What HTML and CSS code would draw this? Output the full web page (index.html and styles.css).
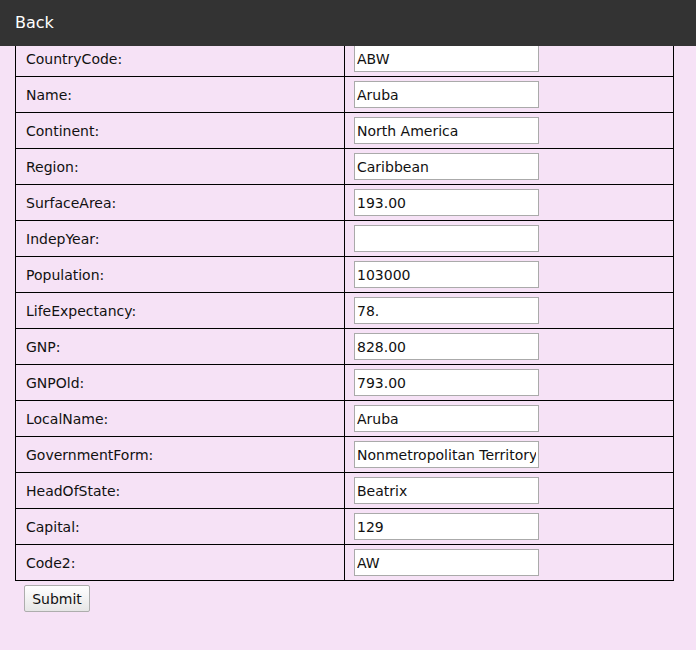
FILE: index.html
```html
<!DOCTYPE html>
<html>
<head>
<meta charset="utf-8">
<link rel="stylesheet" href="styles.css">
</head>
<body>
<div class="topbar"><a class="back" href="#">Back</a></div>
<form class="page">
<table class="grid">
<tr><td>CountryCode:</td><td><input type="text" value="ABW"></td></tr>
<tr><td>Name:</td><td><input type="text" value="Aruba"></td></tr>
<tr><td>Continent:</td><td><input type="text" value="North America"></td></tr>
<tr><td>Region:</td><td><input type="text" value="Caribbean"></td></tr>
<tr><td>SurfaceArea:</td><td><input type="text" value="193.00"></td></tr>
<tr><td>IndepYear:</td><td><input type="text" value=""></td></tr>
<tr><td>Population:</td><td><input type="text" value="103000"></td></tr>
<tr><td>LifeExpectancy:</td><td><input type="text" value="78."></td></tr>
<tr><td>GNP:</td><td><input type="text" value="828.00"></td></tr>
<tr><td>GNPOld:</td><td><input type="text" value="793.00"></td></tr>
<tr><td>LocalName:</td><td><input type="text" value="Aruba"></td></tr>
<tr><td>GovernmentForm:</td><td><input type="text" value="Nonmetropolitan Territory of The Netherlands"></td></tr>
<tr><td>HeadOfState:</td><td><input type="text" value="Beatrix"></td></tr>
<tr><td>Capital:</td><td><input type="text" value="129"></td></tr>
<tr><td>Code2:</td><td><input type="text" value="AW"></td></tr>
</table>
<button type="button" class="submit">Submit</button>
</form>
</body>
</html>
```
FILE: styles.css
```css
html, body {
  margin: 0;
  padding: 0;
  background: #f6e2f6;
  font-family: "DejaVu Sans", Verdana, sans-serif;
  font-size: 14px;
  color: #111;
}
.topbar {
  position: fixed;
  top: 0;
  left: 0;
  right: 0;
  height: 46px;
  background: #333333;
  display: flex;
  align-items: center;
  padding-left: 15px;
  z-index: 5;
}
.back {
  color: #ffffff;
  text-decoration: none;
  font-size: 16px;
  margin-top: -2px;
}
.page {
  padding: 40px 0 0 15px;
  margin: 0;
}
.grid {
  border-collapse: collapse;
  width: 659px;
  table-layout: fixed;
}
.grid td {
  border: 1px solid #000;
  height: 36px;
  padding: 0 10px;
  vertical-align: middle;
  box-sizing: border-box;
}
.grid td + td {
  padding-left: 9px;
}
.grid td input {
  width: 185px;
  height: 27px;
  box-sizing: border-box;
  border: 1px solid #aaaaaa;
  background: #fff;
  font-family: "DejaVu Sans", Verdana, sans-serif;
  font-size: 14px;
  padding: 0 2px;
  margin: 0;
  color: #111;
  display: block;
}
.submit {
  margin: 4px 0 0 9px;
  width: 66px;
  height: 27px;
  font-family: "DejaVu Sans", Verdana, sans-serif;
  font-size: 14px;
  color: #111;
  border: 1px solid #adadad;
  border-radius: 2px;
  background: linear-gradient(#ffffff, #e6e6e6);
  padding: 0;
}
```
